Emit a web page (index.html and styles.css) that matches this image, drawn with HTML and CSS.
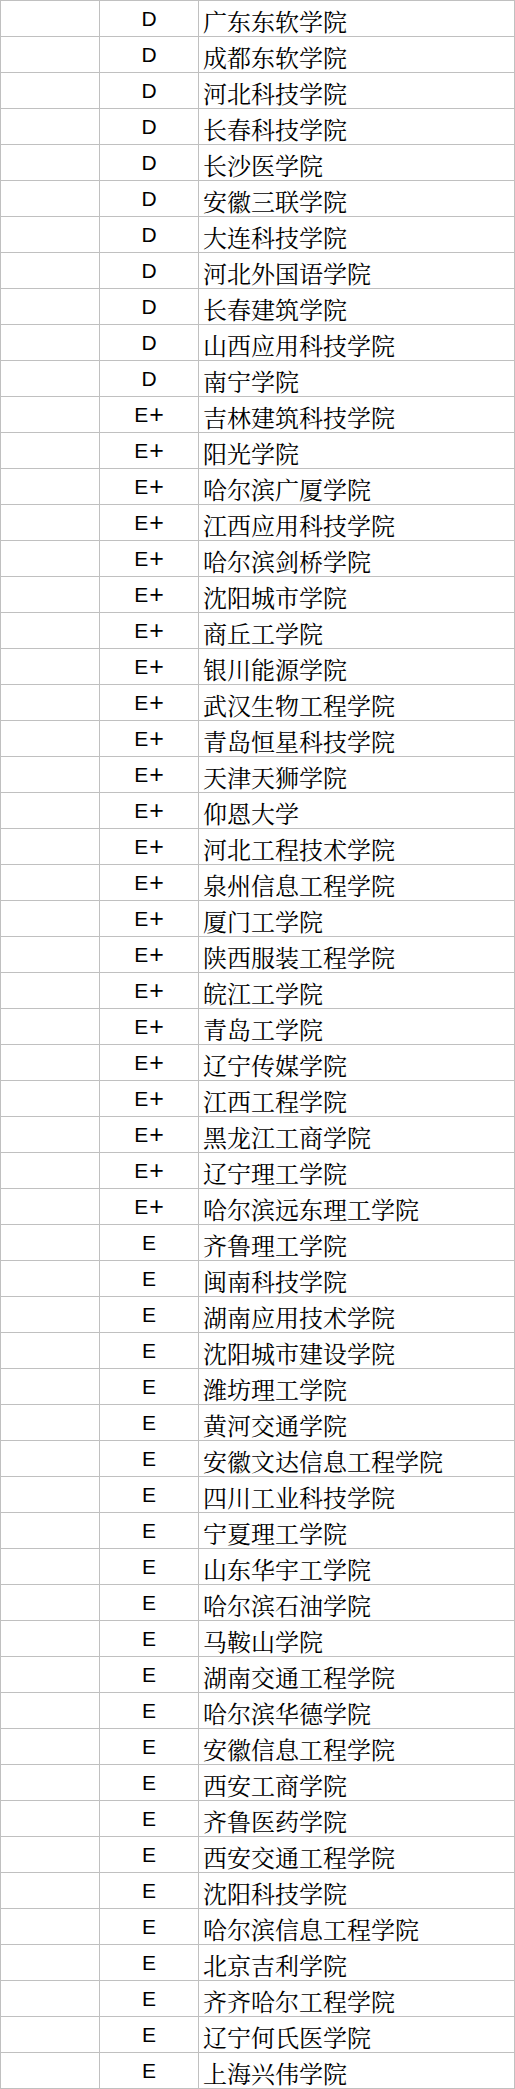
FILE: index.html
```html
<!DOCTYPE html>
<html lang="zh">
<head>
<meta charset="utf-8">
<link rel="stylesheet" href="styles.css">
</head>
<body>
<div class="sheet">
<div class="c"></div><div class="c g">D</div><div class="c n">广东东软学院</div>
<div class="c"></div><div class="c g">D</div><div class="c n">成都东软学院</div>
<div class="c"></div><div class="c g">D</div><div class="c n">河北科技学院</div>
<div class="c"></div><div class="c g">D</div><div class="c n">长春科技学院</div>
<div class="c"></div><div class="c g">D</div><div class="c n">长沙医学院</div>
<div class="c"></div><div class="c g">D</div><div class="c n">安徽三联学院</div>
<div class="c"></div><div class="c g">D</div><div class="c n">大连科技学院</div>
<div class="c"></div><div class="c g">D</div><div class="c n">河北外国语学院</div>
<div class="c"></div><div class="c g">D</div><div class="c n">长春建筑学院</div>
<div class="c"></div><div class="c g">D</div><div class="c n">山西应用科技学院</div>
<div class="c"></div><div class="c g">D</div><div class="c n">南宁学院</div>
<div class="c"></div><div class="c g">E<span class="plus">+</span></div><div class="c n">吉林建筑科技学院</div>
<div class="c"></div><div class="c g">E<span class="plus">+</span></div><div class="c n">阳光学院</div>
<div class="c"></div><div class="c g">E<span class="plus">+</span></div><div class="c n">哈尔滨广厦学院</div>
<div class="c"></div><div class="c g">E<span class="plus">+</span></div><div class="c n">江西应用科技学院</div>
<div class="c"></div><div class="c g">E<span class="plus">+</span></div><div class="c n">哈尔滨剑桥学院</div>
<div class="c"></div><div class="c g">E<span class="plus">+</span></div><div class="c n">沈阳城市学院</div>
<div class="c"></div><div class="c g">E<span class="plus">+</span></div><div class="c n">商丘工学院</div>
<div class="c"></div><div class="c g">E<span class="plus">+</span></div><div class="c n">银川能源学院</div>
<div class="c"></div><div class="c g">E<span class="plus">+</span></div><div class="c n">武汉生物工程学院</div>
<div class="c"></div><div class="c g">E<span class="plus">+</span></div><div class="c n">青岛恒星科技学院</div>
<div class="c"></div><div class="c g">E<span class="plus">+</span></div><div class="c n">天津天狮学院</div>
<div class="c"></div><div class="c g">E<span class="plus">+</span></div><div class="c n">仰恩大学</div>
<div class="c"></div><div class="c g">E<span class="plus">+</span></div><div class="c n">河北工程技术学院</div>
<div class="c"></div><div class="c g">E<span class="plus">+</span></div><div class="c n">泉州信息工程学院</div>
<div class="c"></div><div class="c g">E<span class="plus">+</span></div><div class="c n">厦门工学院</div>
<div class="c"></div><div class="c g">E<span class="plus">+</span></div><div class="c n">陕西服装工程学院</div>
<div class="c"></div><div class="c g">E<span class="plus">+</span></div><div class="c n">皖江工学院</div>
<div class="c"></div><div class="c g">E<span class="plus">+</span></div><div class="c n">青岛工学院</div>
<div class="c"></div><div class="c g">E<span class="plus">+</span></div><div class="c n">辽宁传媒学院</div>
<div class="c"></div><div class="c g">E<span class="plus">+</span></div><div class="c n">江西工程学院</div>
<div class="c"></div><div class="c g">E<span class="plus">+</span></div><div class="c n">黑龙江工商学院</div>
<div class="c"></div><div class="c g">E<span class="plus">+</span></div><div class="c n">辽宁理工学院</div>
<div class="c"></div><div class="c g">E<span class="plus">+</span></div><div class="c n">哈尔滨远东理工学院</div>
<div class="c"></div><div class="c g">E</div><div class="c n">齐鲁理工学院</div>
<div class="c"></div><div class="c g">E</div><div class="c n">闽南科技学院</div>
<div class="c"></div><div class="c g">E</div><div class="c n">湖南应用技术学院</div>
<div class="c"></div><div class="c g">E</div><div class="c n">沈阳城市建设学院</div>
<div class="c"></div><div class="c g">E</div><div class="c n">潍坊理工学院</div>
<div class="c"></div><div class="c g">E</div><div class="c n">黄河交通学院</div>
<div class="c"></div><div class="c g">E</div><div class="c n">安徽文达信息工程学院</div>
<div class="c"></div><div class="c g">E</div><div class="c n">四川工业科技学院</div>
<div class="c"></div><div class="c g">E</div><div class="c n">宁夏理工学院</div>
<div class="c"></div><div class="c g">E</div><div class="c n">山东华宇工学院</div>
<div class="c"></div><div class="c g">E</div><div class="c n">哈尔滨石油学院</div>
<div class="c"></div><div class="c g">E</div><div class="c n">马鞍山学院</div>
<div class="c"></div><div class="c g">E</div><div class="c n">湖南交通工程学院</div>
<div class="c"></div><div class="c g">E</div><div class="c n">哈尔滨华德学院</div>
<div class="c"></div><div class="c g">E</div><div class="c n">安徽信息工程学院</div>
<div class="c"></div><div class="c g">E</div><div class="c n">西安工商学院</div>
<div class="c"></div><div class="c g">E</div><div class="c n">齐鲁医药学院</div>
<div class="c"></div><div class="c g">E</div><div class="c n">西安交通工程学院</div>
<div class="c"></div><div class="c g">E</div><div class="c n">沈阳科技学院</div>
<div class="c"></div><div class="c g">E</div><div class="c n">哈尔滨信息工程学院</div>
<div class="c"></div><div class="c g">E</div><div class="c n">北京吉利学院</div>
<div class="c"></div><div class="c g">E</div><div class="c n">齐齐哈尔工程学院</div>
<div class="c"></div><div class="c g">E</div><div class="c n">辽宁何氏医学院</div>
<div class="c"></div><div class="c g">E</div><div class="c n">上海兴伟学院</div>
</div>
</body>
</html>
```
FILE: styles.css
```css
html, body {
  margin: 0;
  padding: 0;
  background: #ffffff;
}
.sheet {
  display: grid;
  grid-template-columns: 98px 98px 315px;
  grid-auto-rows: 35px;
  gap: 1px;
  padding: 1px;
  background: #c0c0c0;
  width: 513px;
}
.c {
  background: #ffffff;
  color: #000000;
  display: flex;
  align-items: center;
  overflow: hidden;
  white-space: nowrap;
}
.g {
  justify-content: center;
  font-family: "Liberation Sans", Arial, sans-serif;
  font-size: 21px;
}
.plus {
  font-size: 25px;
  margin-left: 1px;
}
.n {
  padding-left: 4px;
  padding-top: 3px;
  font-family: "Noto Serif CJK SC", "Noto Sans CJK SC", serif;
  font-size: 24px;
}
```
